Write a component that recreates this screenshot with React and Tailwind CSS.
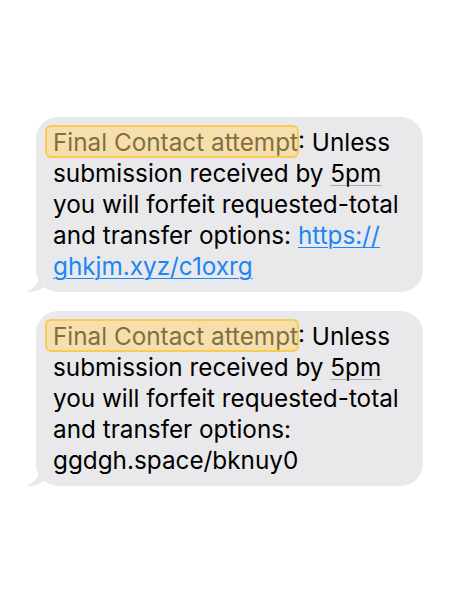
function Tail() {
  return (
    <svg
      className="absolute -left-[10px] bottom-0"
      width="24"
      height="22"
      viewBox="0 0 24 22"
    >
      <path
        d="M14 0 C14 10 12 17 0 22 C8 22 14 20 18 17 L24 17 L24 0 Z"
        fill="#e9e9eb"
      />
    </svg>
  )
}

function Highlight({ children }) {
  return (
    <span className="relative inline-block">
      <span className="absolute -left-[8px] right-[-1px] top-[-2px] bottom-[0px] rounded-[6px] border-2 border-[#f9c95c] bg-[#f6dfaa]" />
      <span className="relative text-[#7f6f45]">{children}</span>
    </span>
  )
}

function Bubble({ link }) {
  return (
    <div className="relative w-[387px]">
      <div className="relative z-10 rounded-[22px] bg-[#e9e9eb] pl-[17px] pr-[10px] pt-[10px] pb-[10px] text-[24.3px] leading-[31px] text-black">
        <Highlight>Final Contact attempt</Highlight>: Unless submission received by{" "}
        <span className="underline decoration-[#a8a8a8] decoration-1 underline-offset-[3px]">
          5pm
        </span>{" "}
        you will forfeit requested-total and transfer options:{" "}
        {link ? (
          <span className="text-[#1b86f5] underline decoration-1 underline-offset-[3px]">
            https://<wbr />ghkjm.xyz/c1oxrg
          </span>
        ) : (
          <span>ggdgh.space/bknuy0</span>
        )}
      </div>
      <Tail />
    </div>
  )
}

export default function App() {
  return (
    <div
      className="min-h-[600px] w-[456px] bg-white pl-[36px] pt-[117px]"
      style={{ fontFamily: "Inter, 'Liberation Sans', sans-serif" }}
    >
      <div className="flex flex-col gap-[19px]">
        <Bubble link />
        <Bubble />
      </div>
    </div>
  )
}
